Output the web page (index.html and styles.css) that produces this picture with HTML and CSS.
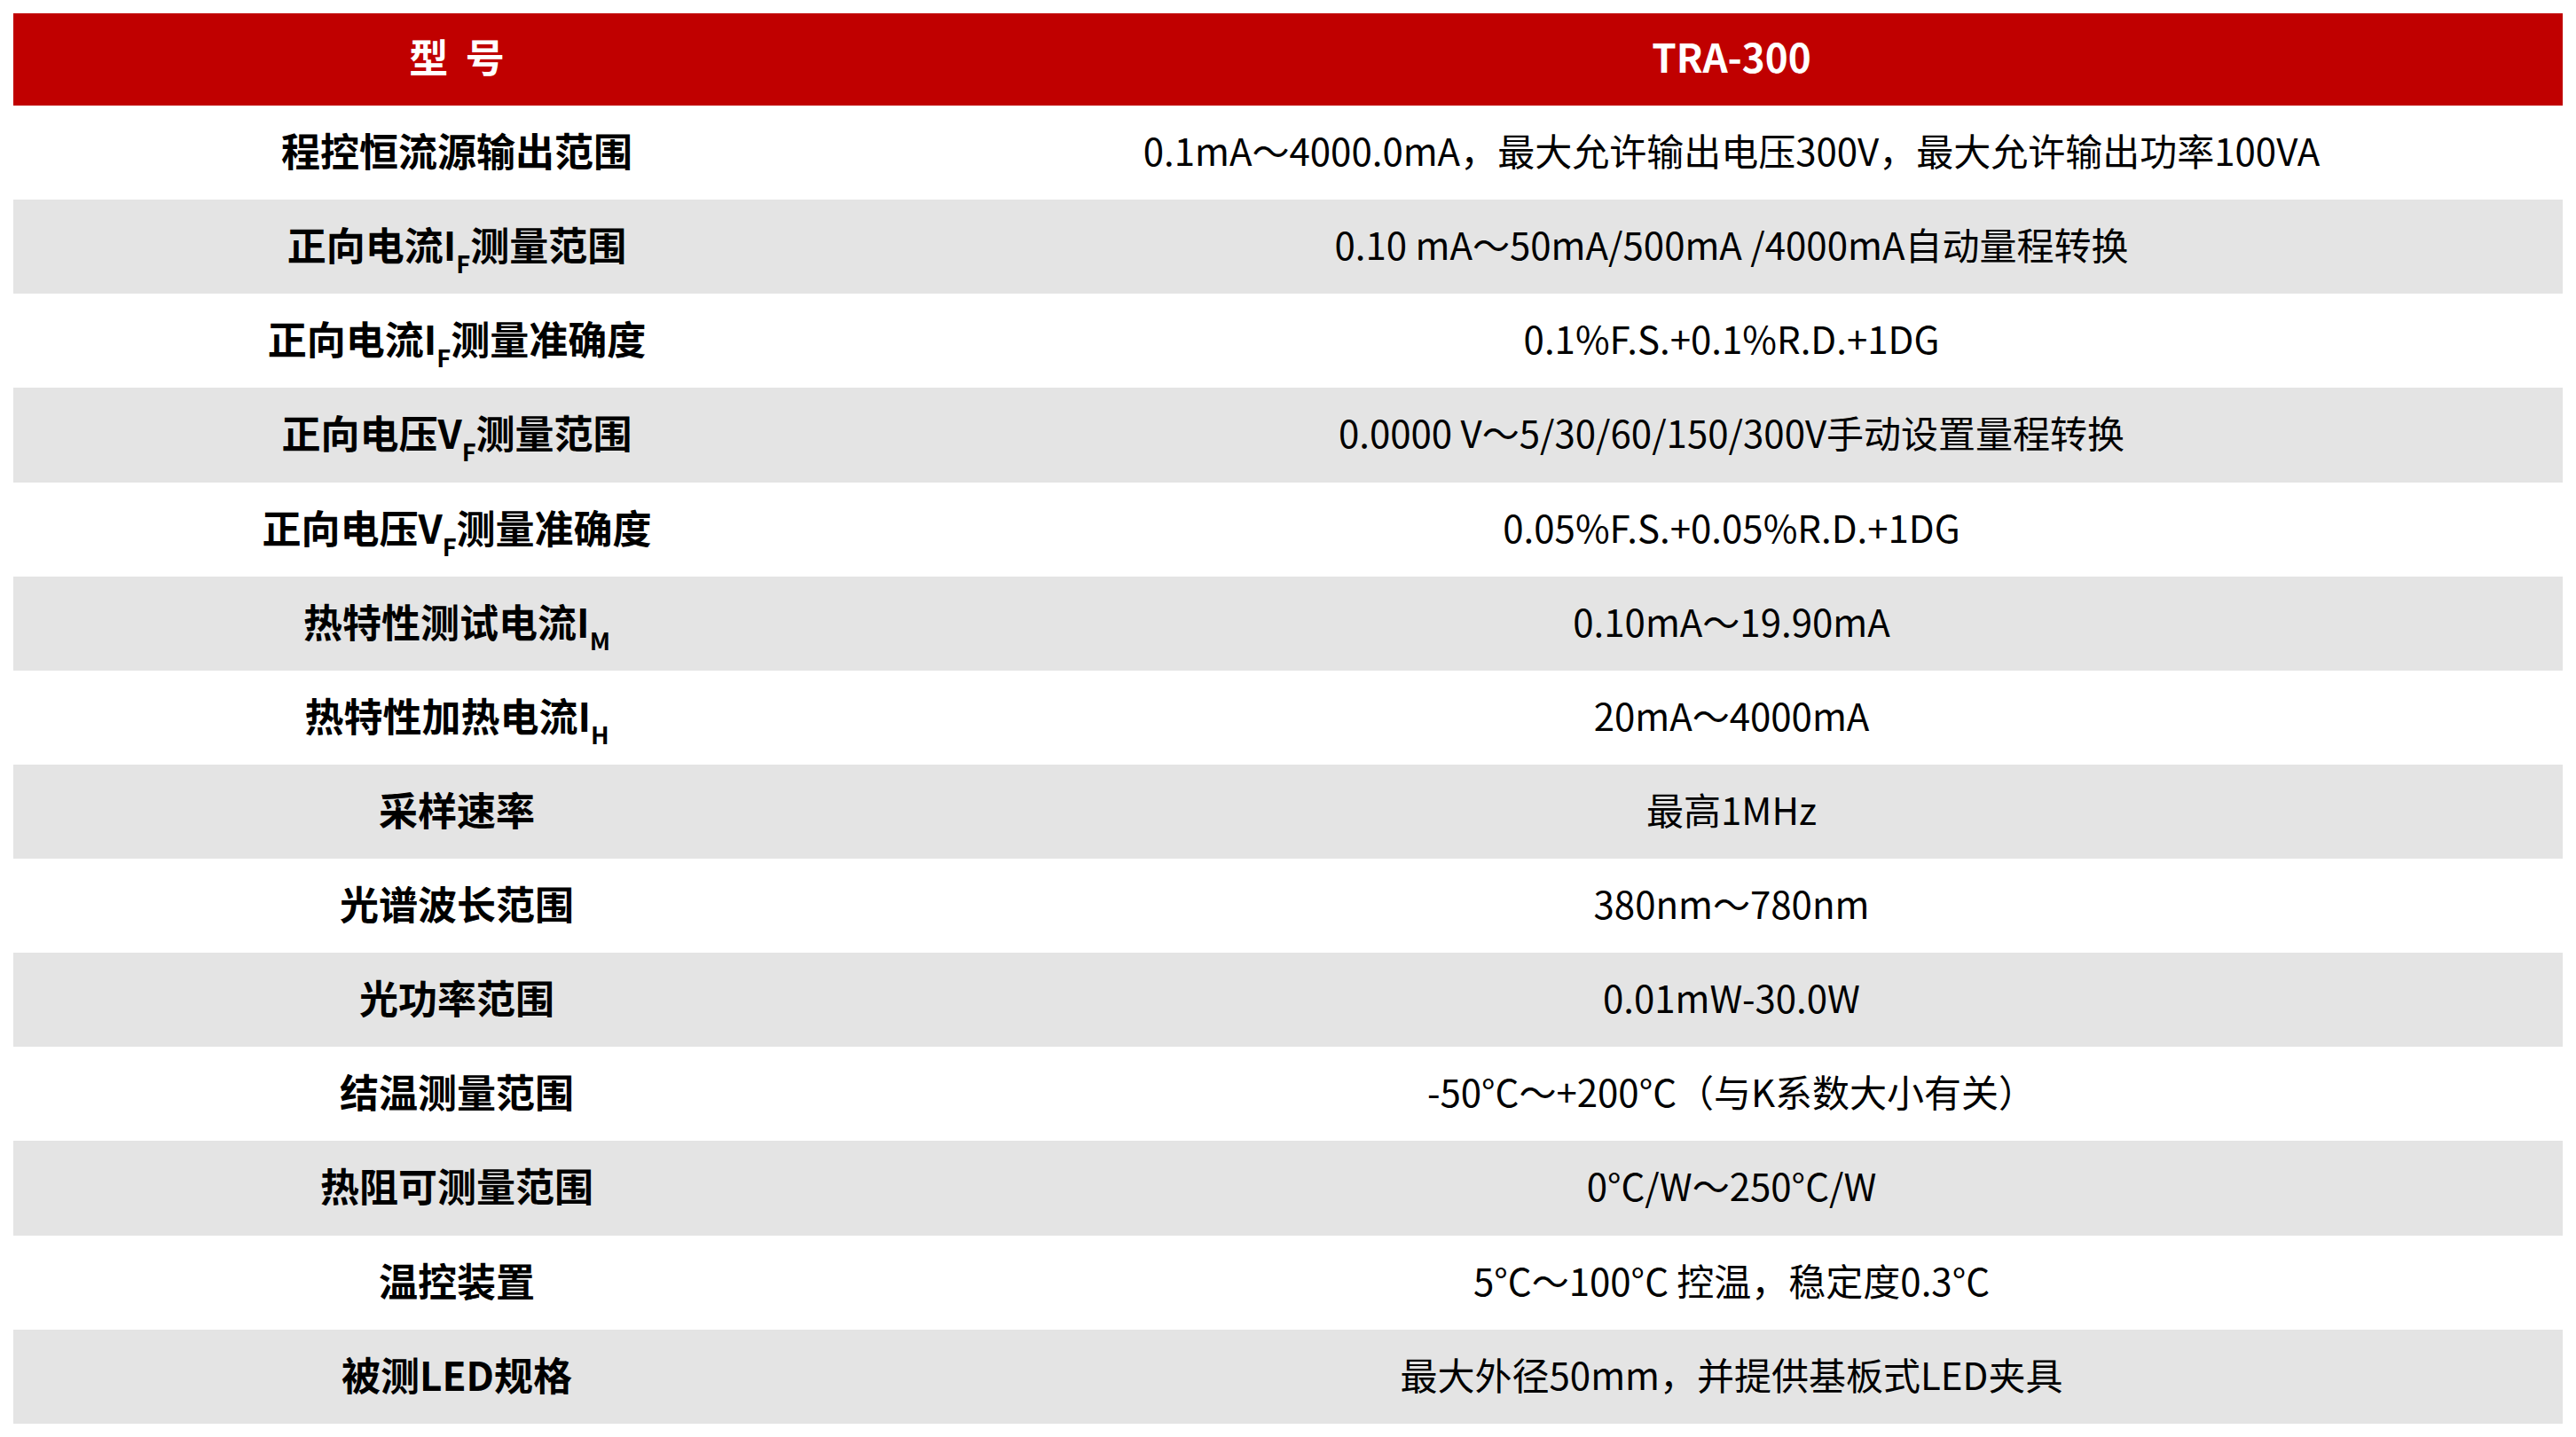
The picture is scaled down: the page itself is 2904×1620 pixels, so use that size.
FILE: index.html
```html
<!DOCTYPE html>
<html lang="zh-CN">
<head>
<meta charset="utf-8">
<link rel="stylesheet" href="styles.css">
</head>
<body>
<div class="spec">
  <div class="row head"><div class="k">型 号</div><div class="v">TRA-300</div></div>
  <div class="row"><div class="k">程控恒流源输出范围</div><div class="v">0.1mA～4000.0mA，最大允许输出电压300V，最大允许输出功率100VA</div></div>
  <div class="row alt"><div class="k">正向电流I<sub>F</sub>测量范围</div><div class="v">0.10 mA～50mA/500mA /4000mA自动量程转换</div></div>
  <div class="row"><div class="k">正向电流I<sub>F</sub>测量准确度</div><div class="v">0.1%F.S.+0.1%R.D.+1DG</div></div>
  <div class="row alt"><div class="k">正向电压V<sub>F</sub>测量范围</div><div class="v">0.0000 V～5/30/60/150/300V手动设置量程转换</div></div>
  <div class="row"><div class="k">正向电压V<sub>F</sub>测量准确度</div><div class="v">0.05%F.S.+0.05%R.D.+1DG</div></div>
  <div class="row alt"><div class="k">热特性测试电流I<sub>M</sub></div><div class="v">0.10mA～19.90mA</div></div>
  <div class="row"><div class="k">热特性加热电流I<sub>H</sub></div><div class="v">20mA～4000mA</div></div>
  <div class="row alt"><div class="k">采样速率</div><div class="v">最高1MHz</div></div>
  <div class="row"><div class="k">光谱波长范围</div><div class="v">380nm～780nm</div></div>
  <div class="row alt"><div class="k">光功率范围</div><div class="v">0.01mW-30.0W</div></div>
  <div class="row"><div class="k">结温测量范围</div><div class="v">-50°C～+200°C（与K系数大小有关）</div></div>
  <div class="row alt"><div class="k">热阻可测量范围</div><div class="v">0°C/W～250°C/W</div></div>
  <div class="row"><div class="k">温控装置</div><div class="v">5°C～100°C 控温，稳定度0.3°C</div></div>
  <div class="row alt"><div class="k">被测LED规格</div><div class="v">最大外径50mm，并提供基板式LED夹具</div></div>
</div>
</body>
</html>
```

FILE: styles.css
```css
html, body {
  margin: 0;
  padding: 0;
  background: #ffffff;
}
body {
  padding: 15px;
  font-family: "Noto Sans CJK SC", "Noto Sans", sans-serif;
  color: #000000;
}
.spec {
  width: 2874px;
  display: flex;
  flex-direction: column;
}
.row {
  display: grid;
  grid-template-columns: 1000px 1874px;
  height: 106.14px;
  align-items: center;
  font-size: 44px;
  line-height: 1;
  padding-bottom: 6px;
  box-sizing: border-box;
}
.row.alt {
  background: #e4e4e4;
}
.row.head {
  height: 104px;
  background: #c00000;
  color: #ffffff;
  font-weight: 900;
  padding-bottom: 8px;
}
.row.head .k {
  word-spacing: 0.22em;
}
.row.head .v {
  font-weight: 700;
  font-size: 44px;
}
.k {
  text-align: center;
  font-weight: 700;
  white-space: nowrap;
}
.v {
  text-align: center;
  font-weight: 400;
  font-size: 42px;
  white-space: nowrap;
}
sub {
  font-size: 0.62em;
  line-height: 0;
  vertical-align: -0.5em;
}
```
